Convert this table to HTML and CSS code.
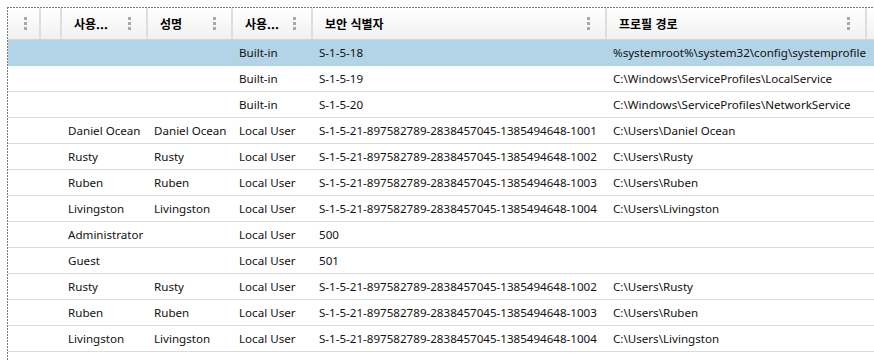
FILE: index.html
```html
<!DOCTYPE html>
<html lang="ko">
<head>
    <meta charset="UTF-8">
    <title>사용자 프로필</title>
    <link rel="stylesheet" href="styles.css">
</head>
<body>
    <div class="grid">
        <div class="row head">
            <div class="hc first"><span class="grip"></span></div>
            <div class="hc"></div>
            <div class="hc"><span class="label">사용...</span><span class="grip"></span></div>
            <div class="hc"><span class="label">성명</span><span class="grip"></span></div>
            <div class="hc"><span class="label">사용...</span><span class="grip"></span></div>
            <div class="hc"><span class="label">보안 식별자</span><span class="grip"></span></div>
            <div class="hc"><span class="label">프로필 경로</span><span class="grip"></span></div>
            <div class="hc"></div>
        </div>

        <div class="row selected">
            <div class="c"></div><div class="c"></div><div class="c"></div><div class="c"></div>
            <div class="c">Built-in</div><div class="c">S-1-5-18</div>
            <div class="c">%systemroot%\system32\config\systemprofile</div><div class="c"></div>
        </div>
        <div class="row">
            <div class="c"></div><div class="c"></div><div class="c"></div><div class="c"></div>
            <div class="c">Built-in</div><div class="c">S-1-5-19</div>
            <div class="c">C:\Windows\ServiceProfiles\LocalService</div><div class="c"></div>
        </div>
        <div class="row">
            <div class="c"></div><div class="c"></div><div class="c"></div><div class="c"></div>
            <div class="c">Built-in</div><div class="c">S-1-5-20</div>
            <div class="c">C:\Windows\ServiceProfiles\NetworkService</div><div class="c"></div>
        </div>
        <div class="row">
            <div class="c"></div><div class="c"></div><div class="c">Daniel Ocean</div><div class="c">Daniel Ocean</div>
            <div class="c">Local User</div><div class="c">S-1-5-21-897582789-2838457045-1385494648-1001</div>
            <div class="c">C:\Users\Daniel Ocean</div><div class="c"></div>
        </div>
        <div class="row">
            <div class="c"></div><div class="c"></div><div class="c">Rusty</div><div class="c">Rusty</div>
            <div class="c">Local User</div><div class="c">S-1-5-21-897582789-2838457045-1385494648-1002</div>
            <div class="c">C:\Users\Rusty</div><div class="c"></div>
        </div>
        <div class="row">
            <div class="c"></div><div class="c"></div><div class="c">Ruben</div><div class="c">Ruben</div>
            <div class="c">Local User</div><div class="c">S-1-5-21-897582789-2838457045-1385494648-1003</div>
            <div class="c">C:\Users\Ruben</div><div class="c"></div>
        </div>
        <div class="row">
            <div class="c"></div><div class="c"></div><div class="c">Livingston</div><div class="c">Livingston</div>
            <div class="c">Local User</div><div class="c">S-1-5-21-897582789-2838457045-1385494648-1004</div>
            <div class="c">C:\Users\Livingston</div><div class="c"></div>
        </div>
        <div class="row">
            <div class="c"></div><div class="c"></div><div class="c">Administrator</div><div class="c"></div>
            <div class="c">Local User</div><div class="c">500</div>
            <div class="c"></div><div class="c"></div>
        </div>
        <div class="row">
            <div class="c"></div><div class="c"></div><div class="c">Guest</div><div class="c"></div>
            <div class="c">Local User</div><div class="c">501</div>
            <div class="c"></div><div class="c"></div>
        </div>
        <div class="row">
            <div class="c"></div><div class="c"></div><div class="c">Rusty</div><div class="c">Rusty</div>
            <div class="c">Local User</div><div class="c">S-1-5-21-897582789-2838457045-1385494648-1002</div>
            <div class="c">C:\Users\Rusty</div><div class="c"></div>
        </div>
        <div class="row">
            <div class="c"></div><div class="c"></div><div class="c">Ruben</div><div class="c">Ruben</div>
            <div class="c">Local User</div><div class="c">S-1-5-21-897582789-2838457045-1385494648-1003</div>
            <div class="c">C:\Users\Ruben</div><div class="c"></div>
        </div>
        <div class="row">
            <div class="c"></div><div class="c"></div><div class="c">Livingston</div><div class="c">Livingston</div>
            <div class="c">Local User</div><div class="c">S-1-5-21-897582789-2838457045-1385494648-1004</div>
            <div class="c">C:\Users\Livingston</div><div class="c"></div>
        </div>
    </div>
</body>
</html>
```

FILE: styles.css
```css
body {
    margin: 0;
    background-color: #fff;
    color: #111;
    font-family: "Noto Sans", "Noto Sans CJK KR", sans-serif;
    font-size: 11.6px;
    overflow: hidden;
}

/* focus rectangle: dotted line top and left */
.grid {
    margin: 7px 0 0 7px;
    padding: 1px 0 0 1px;
    min-height: 360px;
    background-image:
        repeating-linear-gradient(90deg, #7a7a7a 0 2px, transparent 2px 3px),
        repeating-linear-gradient(180deg, #7a7a7a 0 2px, transparent 2px 3px);
    background-size: 100% 1px, 1px 100%;
    background-repeat: no-repeat;
    background-position: 0 0, 0 0;
}

.row {
    display: grid;
    grid-template-columns: 33px 21px 86px 85px 80px 294px 260px 1fr;
    height: 25px;
    border-bottom: 1px solid #dcdcdc;
}

.row.selected {
    background-color: #b3d4e6;
    border-bottom-color: #b3d4e6;
}

.head {
    height: 31px;
    background: linear-gradient(#ffffff, #f1f1f1);
    border-bottom: 1px solid #d5d5d5;
}

.hc {
    display: flex;
    align-items: center;
    border-right: 2px solid #dedede;
    padding-left: 12px;
    font-family: "Noto Sans CJK KR", sans-serif;
    font-weight: bold;
    font-size: 12px;
    color: #000;
    min-width: 0;
}

.hc:last-child {
    border-right: none;
}

.label {
    white-space: nowrap;
}

.grip {
    margin-left: auto;
    margin-right: 15px;
    width: 3px;
    height: 3px;
    margin-bottom: 10px;
    background-color: #a8a8a8;
    box-shadow: 0 5px #a8a8a8, 0 10px #a8a8a8;
}

.hc.first .grip {
    margin-right: 12px;
}

.c {
    display: flex;
    align-items: center;
    padding-left: 6px;
    white-space: nowrap;
    overflow: hidden;
}
```
